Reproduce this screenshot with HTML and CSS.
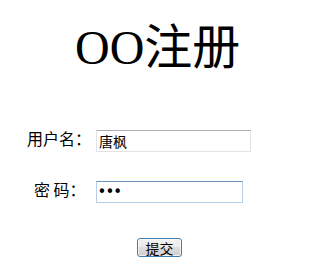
FILE: index.html
```html
<!DOCTYPE html>
<html lang="zh-CN">
<head>
<meta charset="utf-8">
<title>OO注册</title>
<link rel="stylesheet" href="styles.css">
</head>
<body>
<h1 class="title">OO注册</h1>
<form class="form">
  <div class="row row-user">
    <label class="label" for="user">用户名：</label>
    <input class="field field-user" id="user" type="text" value="唐枫">
  </div>
  <div class="row row-pass">
    <label class="label" for="pass">密 码：</label>
    <input class="field field-pass" id="pass" type="password" value="abc">
  </div>
  <div class="row row-submit">
    <button class="submit" type="button">提交</button>
  </div>
</form>
</body>
</html>
```
FILE: styles.css
```css
html, body {
  margin: 0;
  padding: 0;
  background: #ffffff;
}
body {
  font-family: "Noto Sans CJK SC", sans-serif;
  color: #000000;
}
.title {
  margin: 0;
  padding: 24px 0 0 75px;
  font-family: "Liberation Serif", "Noto Sans CJK SC", serif;
  font-weight: normal;
  font-size: 48px;
  line-height: 48px;
  height: 48px;
}
.form {
  margin: 0;
  padding-top: 58px;
}
.row {
  display: flex;
  align-items: center;
  height: 22px;
}
.row-user {
  padding-left: 27px;
}
.row-pass {
  margin-top: 29px;
  padding-left: 34px;
}
.row-submit {
  margin-top: 35px;
  padding-left: 137px;
  height: 19px;
}
.label {
  font-size: 16px;
  line-height: 16px;
  padding-bottom: 6px;
  white-space: pre;
}
.field {
  box-sizing: border-box;
  height: 22px;
  margin: 0;
  padding: 0 2px;
  font-family: "Noto Sans CJK SC", sans-serif;
  font-size: 14px;
  color: #000;
  background: #fff;
  outline: none;
  border-radius: 0;
}
.field-user {
  width: 155px;
  margin-left: 5px;
  border: 1px solid #dfe3e8;
  border-top-color: #abadb3;
}
.field-pass {
  width: 147px;
  margin-left: 10px;
  border: 1px solid #b7cfe6;
  border-top-color: #6e95c0;
  font-family: "DejaVu Sans", sans-serif;
  font-size: 15px;
  letter-spacing: -1px;
  padding-left: 1px;
}
.submit {
  box-sizing: border-box;
  width: 45px;
  height: 19px;
  margin: 0;
  padding: 0;
  font-family: "Noto Sans CJK SC", sans-serif;
  font-size: 14px;
  line-height: 14px;
  color: #000;
  border: 1px solid #3c7fb1;
  border-radius: 3px;
  background: linear-gradient(#f2f2f2 0%, #ebebeb 45%, #dddddd 50%, #cfcfcf 100%);
  box-shadow: inset 0 0 0 1px rgba(255,255,255,0.7);
}
```
